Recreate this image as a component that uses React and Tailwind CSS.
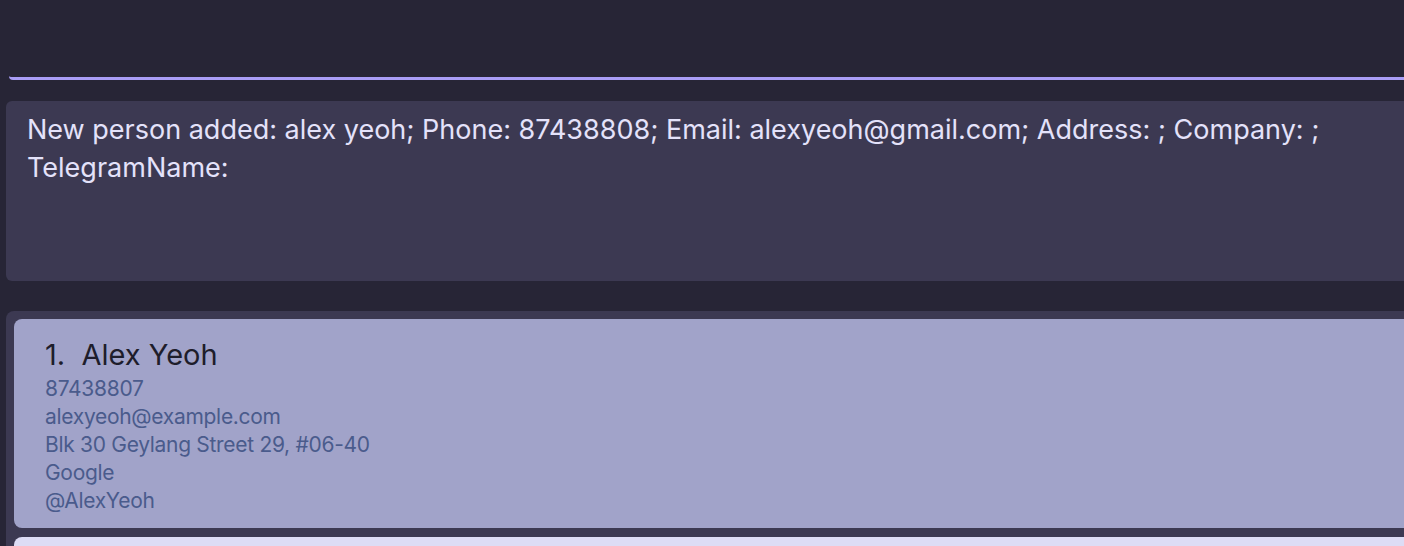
const persons = [
  {
    name: 'Alex Yeoh',
    phone: '87438807',
    email: 'alexyeoh@example.com',
    address: 'Blk 30 Geylang Street 29, #06-40',
    company: 'Google',
    telegram: '@AlexYeoh',
  },
  {
    name: 'Bernice Yu',
    phone: '99272758',
    email: 'berniceyu@example.com',
    address: 'Blk 30 Lorong 3 Serangoon Gardens, #07-18',
    company: 'Meta',
    telegram: '@BerniceYu',
  },
];

function PersonCard({ person, index }) {
  const bg = index % 2 === 0 ? 'bg-[#a1a3c9]' : 'bg-[#dddcf5]';
  return (
    <div className={`${bg} rounded-[8px] h-[209px] shrink-0 pl-[31px] pt-[16px]`}>
      <div className="text-[29px] leading-[40px] text-[#1e1d2b]">
        {index + 1}.&nbsp;&nbsp;{person.name}
      </div>
      <div className="text-[21px] leading-[28px] tracking-[-0.3px] text-[#4a5b8c]">
        <div>{person.phone}</div>
        <div>{person.email}</div>
        <div>{person.address}</div>
        <div>{person.company}</div>
        <div>{person.telegram}</div>
      </div>
    </div>
  );
}

export default function App() {
  return (
    <div
      className="h-[546px] w-full overflow-hidden bg-[#272536] flex flex-col"
      style={{ fontFamily: 'Inter, "Noto Sans", sans-serif' }}
    >
      {/* command box */}
      <div className="ml-[9px] -mr-[20px] h-[80px] shrink-0 border-b-[3px] border-[#a99df6] rounded-[4px]" />

      {/* result display */}
      <div className="mt-[21px] ml-[6px] -mr-[20px] h-[180px] shrink-0 bg-[#3c3952] rounded-[6px] pl-[21px] pt-[10px]">
        <p className="text-[27px] leading-[38px] text-[#e4e2fa]">
          New person added: alex yeoh; Phone: 87438808; Email: alexyeoh@gmail.com; Address: ; Company: ;
          <br />
          TelegramName:
        </p>
      </div>

      {/* person list */}
      <div className="mt-[30px] ml-[6px] -mr-[20px] flex-1 bg-[#3c3952] rounded-[8px] p-[8px] flex flex-col gap-[9px]">
        {persons.map((p, i) => (
          <PersonCard key={p.name} person={p} index={i} />
        ))}
      </div>
    </div>
  );
}
